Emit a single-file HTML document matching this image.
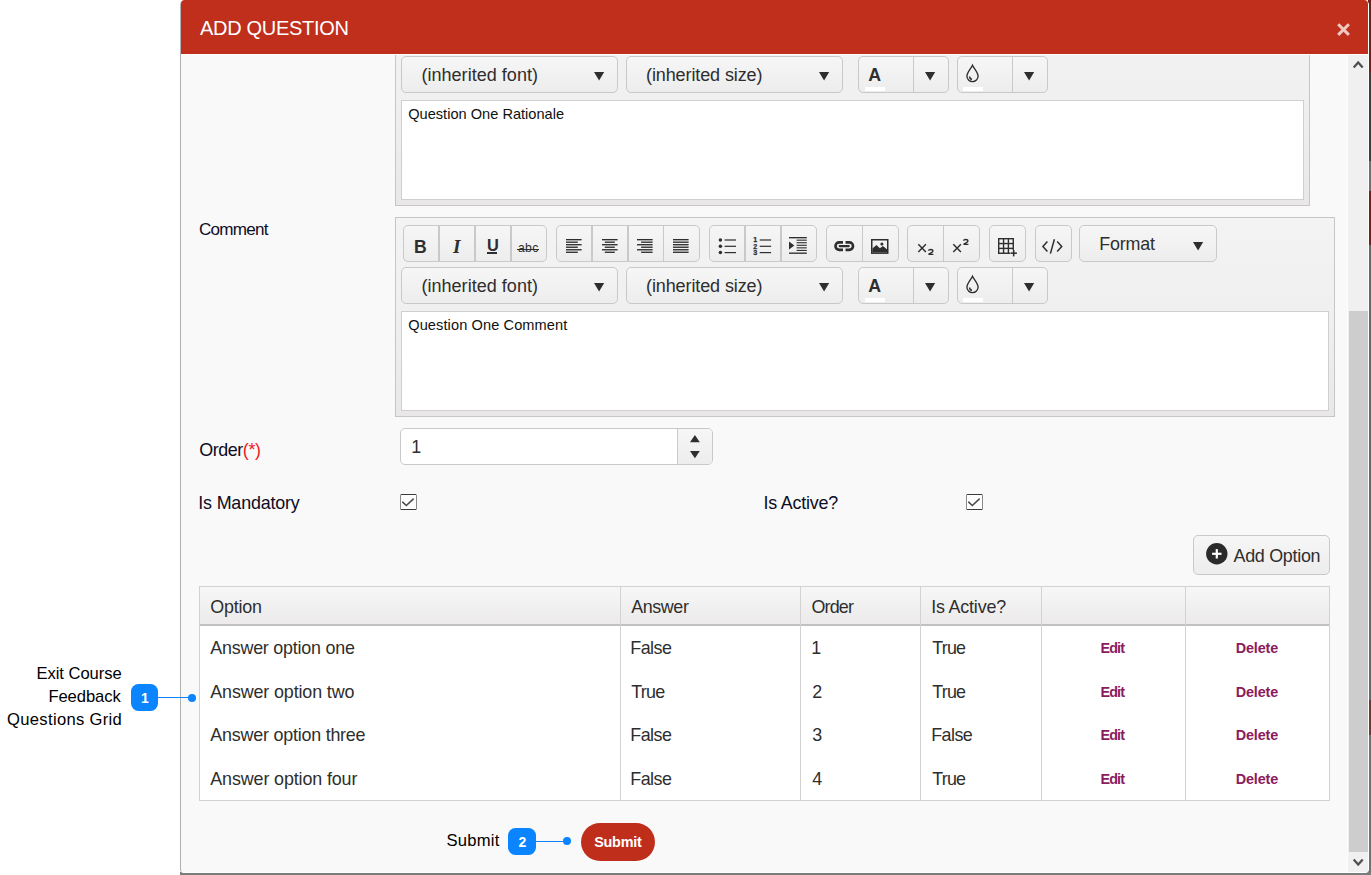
<!DOCTYPE html>
<html lang="en"><head><meta charset="utf-8"><title>Add Question</title>
<style>
html,body{margin:0;padding:0;}
body{width:1371px;height:875px;overflow:hidden;position:relative;background:#fff;font-family:'Liberation Sans', sans-serif;}
body>div,body>svg,body>span{position:absolute;display:block;}
.t{white-space:nowrap;}
svg{overflow:visible;}
</style></head><body>
<div style="left:1368px;top:0px;width:3px;height:875px;background:linear-gradient(#6b231c 0,#6b231c 73px,#3e3e3e 73px,#3e3e3e 161px,#707070 161px,#707070 191px,#6b231c 191px,#6b231c 245px,#686868 245px,#686868 700px,#6b3a35 700px,#6b3a35 735px,#727272 735px);"></div>
<div style="left:180px;top:872px;width:1191px;height:3px;background:#7b7b7b;"></div>
<div style="left:180px;top:0px;width:1189.3px;height:873px;background:#f9f9f9;border-left:1px solid #b1b1b1;border-right:1.3px solid #fff;border-bottom:1px solid #fff;box-sizing:border-box;border-radius:5px 5px 4px 4px;"></div>
<div style="left:395px;top:6.2px;width:915.3px;height:199.4px;background:linear-gradient(#f3f3f3,#f1f0f0 45%,#e9e7e7);border:1px solid #c6c6c6;box-sizing:border-box;"></div>
<div style="left:401px;top:56px;width:217px;height:37px;background:linear-gradient(#f6f6f6,#eeeded);border:1px solid #c9c9c9;border-radius:5px;box-sizing:border-box;"></div>
<span class="t" style="left:421.40px;top:65px;height:20px;line-height:20px;font-size:18.0px;color:#2e2e2e;letter-spacing:0.036px;">(inherited font)</span>
<svg style="left:593.1px;top:70.5px" width="12.2" height="10.6" viewBox="0 0 12.2 10.6"><path d="M1 1 L11.2 1 L6.1 9.6 Z" fill="#2e2e2e"/></svg>
<div style="left:626px;top:56px;width:217px;height:37px;background:linear-gradient(#f6f6f6,#eeeded);border:1px solid #c9c9c9;border-radius:5px;box-sizing:border-box;"></div>
<span class="t" style="left:646.00px;top:65px;height:20px;line-height:20px;font-size:18.0px;color:#2e2e2e;letter-spacing:-0.103px;">(inherited size)</span>
<svg style="left:817.9px;top:70.5px" width="12.2" height="10.6" viewBox="0 0 12.2 10.6"><path d="M1 1 L11.2 1 L6.1 9.6 Z" fill="#2e2e2e"/></svg>
<div style="left:858.3px;top:56px;width:90.6px;height:37px;background:linear-gradient(#f6f6f6,#eeeded);border:1px solid #c9c9c9;border-radius:5px;box-sizing:border-box;"></div>
<div style="left:912.9px;top:57px;width:1.3px;height:35px;background:#c9c9c9;"></div>
<div style="left:864.9px;top:87px;width:20px;height:4px;background:#fff;"></div>
<svg style="left:924.2px;top:70.5px" width="12.2" height="10.6" viewBox="0 0 12.2 10.6"><path d="M1 1 L11.2 1 L6.1 9.6 Z" fill="#2e2e2e"/></svg>
<span class="t" style="left:868.30px;top:65px;height:20px;line-height:20px;font-size:17.8px;color:#2e2e2e;font-weight:700;">A</span>
<div style="left:957.3px;top:56px;width:90.6px;height:37px;background:linear-gradient(#f6f6f6,#eeeded);border:1px solid #c9c9c9;border-radius:5px;box-sizing:border-box;"></div>
<div style="left:1011.9px;top:57px;width:1.3px;height:35px;background:#c9c9c9;"></div>
<div style="left:962.9px;top:87px;width:20px;height:4px;background:#fff;"></div>
<svg style="left:1023.2px;top:70.5px" width="12.2" height="10.6" viewBox="0 0 12.2 10.6"><path d="M1 1 L11.2 1 L6.1 9.6 Z" fill="#2e2e2e"/></svg>
<svg style="left:964.7px;top:64.4px" width="15" height="20" viewBox="0 0 15 20"><path d="M7.5 1.2 C5.8 4.8 1.9 8.4 1.9 12.1 A5.6 5.6 0 0 0 13.1 12.1 C13.1 8.4 9.2 4.8 7.5 1.2 Z" fill="none" stroke="#2e2e2e" stroke-width="1.35"/><path d="M4.6 12.4 A3 3 0 0 0 7 15.3" fill="none" stroke="#2e2e2e" stroke-width="1.5"/></svg>
<div style="left:401px;top:100.2px;width:902.5999999999999px;height:100.3px;background:#fff;border:1px solid #cfcfcf;box-sizing:border-box;"></div>
<span class="t" style="left:408.20px;top:106px;height:16px;line-height:16px;font-size:14.6px;color:#111;letter-spacing:0.007px;">Question One Rationale</span>
<div style="left:395px;top:217.2px;width:940.3px;height:199.4px;background:linear-gradient(#f3f3f3,#f1f0f0 45%,#e9e7e7);border:1px solid #c6c6c6;box-sizing:border-box;"></div>
<div style="left:403.3px;top:225px;width:143.4px;height:37px;background:linear-gradient(#f6f6f6,#eeeded);border:1px solid #c9c9c9;border-radius:5px;box-sizing:border-box;"></div>
<div style="left:438.45px;top:226px;width:1.4px;height:35px;background:#c9c9c9;"></div>
<div style="left:474.3px;top:226px;width:1.4px;height:35px;background:#c9c9c9;"></div>
<div style="left:510.15px;top:226px;width:1.4px;height:35px;background:#c9c9c9;"></div>
<div style="left:556.3px;top:225px;width:143.3px;height:37px;background:linear-gradient(#f6f6f6,#eeeded);border:1px solid #c9c9c9;border-radius:5px;box-sizing:border-box;"></div>
<div style="left:591.42px;top:226px;width:1.4px;height:35px;background:#c9c9c9;"></div>
<div style="left:627.25px;top:226px;width:1.4px;height:35px;background:#c9c9c9;"></div>
<div style="left:663.07px;top:226px;width:1.4px;height:35px;background:#c9c9c9;"></div>
<div style="left:709.3px;top:225px;width:107.5px;height:37px;background:linear-gradient(#f6f6f6,#eeeded);border:1px solid #c9c9c9;border-radius:5px;box-sizing:border-box;"></div>
<div style="left:744.43px;top:226px;width:1.4px;height:35px;background:#c9c9c9;"></div>
<div style="left:780.27px;top:226px;width:1.4px;height:35px;background:#c9c9c9;"></div>
<div style="left:826.3px;top:225px;width:72.3px;height:37px;background:linear-gradient(#f6f6f6,#eeeded);border:1px solid #c9c9c9;border-radius:5px;box-sizing:border-box;"></div>
<div style="left:861.75px;top:226px;width:1.4px;height:35px;background:#c9c9c9;"></div>
<div style="left:907.3px;top:225px;width:72.3px;height:37px;background:linear-gradient(#f6f6f6,#eeeded);border:1px solid #c9c9c9;border-radius:5px;box-sizing:border-box;"></div>
<div style="left:942.75px;top:226px;width:1.4px;height:35px;background:#c9c9c9;"></div>
<div style="left:989.3px;top:225px;width:36.4px;height:37px;background:linear-gradient(#f6f6f6,#eeeded);border:1px solid #c9c9c9;border-radius:5px;box-sizing:border-box;"></div>
<div style="left:1035.1px;top:225px;width:36.7px;height:37px;background:linear-gradient(#f6f6f6,#eeeded);border:1px solid #c9c9c9;border-radius:5px;box-sizing:border-box;"></div>
<span class="t" style="left:414.00px;top:237px;height:20px;line-height:20px;font-size:17.6px;color:#2e2e2e;font-weight:700;">B</span>
<span class="t" style="left:452.90px;top:236px;height:21px;line-height:21px;font-size:19.2px;color:#2e2e2e;font-weight:700;font-family:'Liberation Serif', serif;font-style:italic;">I</span>
<span class="t" style="left:486.90px;top:236px;height:18px;line-height:18px;font-size:16.4px;color:#2e2e2e;font-weight:700;">U</span>
<div style="left:486.9px;top:252.3px;width:10.6px;height:1.4px;background:#2e2e2e;"></div>
<span class="t" style="left:518.00px;top:241px;height:14px;line-height:14px;font-size:12.2px;color:#2e2e2e;letter-spacing:0.322px;">abc</span>
<div style="left:517.2px;top:249.0px;width:21.8px;height:1.2px;background:#2e2e2e;"></div>
<svg style="left:564.6px;top:238.0px" width="18" height="16" viewBox="0 0 18 16"><rect x="1.00" y="1.00" width="15.60" height="1.35" fill="#2e2e2e"/><rect x="1.00" y="3.52" width="11.80" height="1.35" fill="#2e2e2e"/><rect x="1.00" y="6.04" width="15.60" height="1.35" fill="#2e2e2e"/><rect x="1.00" y="8.56" width="11.80" height="1.35" fill="#2e2e2e"/><rect x="1.00" y="11.08" width="15.60" height="1.35" fill="#2e2e2e"/><rect x="1.00" y="13.60" width="11.80" height="1.35" fill="#2e2e2e"/></svg>
<svg style="left:600.6px;top:238.0px" width="18" height="16" viewBox="0 0 18 16"><rect x="1.00" y="1.00" width="15.60" height="1.35" fill="#2e2e2e"/><rect x="3.80" y="3.52" width="10.00" height="1.35" fill="#2e2e2e"/><rect x="1.00" y="6.04" width="15.60" height="1.35" fill="#2e2e2e"/><rect x="3.80" y="8.56" width="10.00" height="1.35" fill="#2e2e2e"/><rect x="1.00" y="11.08" width="15.60" height="1.35" fill="#2e2e2e"/><rect x="3.80" y="13.60" width="10.00" height="1.35" fill="#2e2e2e"/></svg>
<svg style="left:636.2px;top:238.0px" width="18" height="16" viewBox="0 0 18 16"><rect x="1.00" y="1.00" width="15.60" height="1.35" fill="#2e2e2e"/><rect x="5.10" y="3.52" width="11.50" height="1.35" fill="#2e2e2e"/><rect x="1.00" y="6.04" width="15.60" height="1.35" fill="#2e2e2e"/><rect x="5.10" y="8.56" width="11.50" height="1.35" fill="#2e2e2e"/><rect x="1.00" y="11.08" width="15.60" height="1.35" fill="#2e2e2e"/><rect x="5.10" y="13.60" width="11.50" height="1.35" fill="#2e2e2e"/></svg>
<svg style="left:672.0px;top:238.0px" width="18" height="16" viewBox="0 0 18 16"><rect x="1.00" y="1.00" width="15.60" height="1.35" fill="#2e2e2e"/><rect x="1.00" y="3.52" width="15.60" height="1.35" fill="#2e2e2e"/><rect x="1.00" y="6.04" width="15.60" height="1.35" fill="#2e2e2e"/><rect x="1.00" y="8.56" width="15.60" height="1.35" fill="#2e2e2e"/><rect x="1.00" y="11.08" width="15.60" height="1.35" fill="#2e2e2e"/><rect x="1.00" y="13.60" width="15.60" height="1.35" fill="#2e2e2e"/></svg>
<svg style="left:717.5px;top:236.9px" width="20" height="20" viewBox="0 0 20 20"><circle cx="2.4" cy="3.00" r="1.75" fill="#2e2e2e"/><rect x="6.6" y="2.40" width="11.4" height="1.2" fill="#2e2e2e"/><circle cx="2.4" cy="9.30" r="1.75" fill="#2e2e2e"/><rect x="6.6" y="8.70" width="11.4" height="1.2" fill="#2e2e2e"/><circle cx="2.4" cy="15.60" r="1.75" fill="#2e2e2e"/><rect x="6.6" y="15.00" width="11.4" height="1.2" fill="#2e2e2e"/></svg>
<svg style="left:753.2px;top:236.9px" width="20" height="20" viewBox="0 0 20 20"><text x="0.2" y="5.45" font-family=''Liberation Sans', sans-serif' font-weight="700" font-size="7.2" stroke="#2e2e2e" stroke-width="0.25" fill="#2e2e2e">1</text><rect x="6.7" y="2.40" width="11.4" height="1.2" fill="#2e2e2e"/><text x="0.2" y="11.75" font-family=''Liberation Sans', sans-serif' font-weight="700" font-size="7.2" stroke="#2e2e2e" stroke-width="0.25" fill="#2e2e2e">2</text><rect x="6.7" y="8.70" width="11.4" height="1.2" fill="#2e2e2e"/><text x="0.2" y="18.05" font-family=''Liberation Sans', sans-serif' font-weight="700" font-size="7.2" stroke="#2e2e2e" stroke-width="0.25" fill="#2e2e2e">3</text><rect x="6.7" y="15.00" width="11.4" height="1.2" fill="#2e2e2e"/></svg>
<svg style="left:789.1px;top:237.3px" width="18" height="17" viewBox="0 0 18 17"><rect x="0" y="0" width="17.8" height="1.35" fill="#2e2e2e"/><rect x="0" y="15.5" width="17.8" height="1.35" fill="#2e2e2e"/><rect x="7.6" y="2.62" width="10.2" height="1.1" fill="#2e2e2e"/><rect x="7.6" y="5.18" width="10.2" height="1.1" fill="#2e2e2e"/><rect x="7.6" y="7.74" width="10.2" height="1.1" fill="#2e2e2e"/><rect x="7.6" y="10.30" width="10.2" height="1.1" fill="#2e2e2e"/><rect x="7.6" y="12.86" width="10.2" height="1.1" fill="#2e2e2e"/><path d="M0 4.4 L5.3 8.4 L0 12.4 Z" fill="#2e2e2e"/></svg>
<svg style="left:833.7px;top:240.8px" width="20.5" height="10.2" viewBox="0 0 20.5 10.2"><path d="M9.0 1.35 L5.2 1.35 A3.75 3.75 0 0 0 5.2 8.85 L9.0 8.85" fill="none" stroke="#2e2e2e" stroke-width="2.6"/><path d="M11.5 1.35 L15.3 1.35 A3.75 3.75 0 0 1 15.3 8.85 L11.5 8.85" fill="none" stroke="#2e2e2e" stroke-width="2.6"/><rect x="4.6" y="4.0" width="11.3" height="2.2" rx="1.1" fill="#2e2e2e"/></svg>
<svg style="left:870.6px;top:239.1px" width="17.5" height="15" viewBox="0 0 17.5 15"><rect x="0.75" y="0.75" width="16" height="13.4" fill="none" stroke="#2e2e2e" stroke-width="1.5"/><path d="M1.4 13.6 L1.4 9.6 L5.4 6.0 L8.9 9.3 L11.9 6.9 L16.2 10.4 L16.2 13.6 Z" fill="#2e2e2e"/><circle cx="10.9" cy="5.0" r="1.55" fill="#2e2e2e"/></svg>
<svg style="left:916.7px;top:243.2px" width="10" height="10" viewBox="0 0 10 10"><path d="M1.3 1.2 L8.9 8.9 M8.9 1.2 L1.3 8.9" stroke="#2e2e2e" stroke-width="1.45" fill="none"/></svg>
<svg style="left:926.6px;top:248.2px" width="8" height="8" viewBox="0 0 8 8"><path d="M1.5 2.6 Q1.7 1.5 3.7 1.5 Q5.9 1.5 5.9 2.9 Q5.9 3.9 4.4 4.7 L1.5 6.3 L6.4 6.3" stroke="#2e2e2e" stroke-width="1.35" fill="none"/></svg>
<svg style="left:952.4px;top:243.2px" width="10" height="10" viewBox="0 0 10 10"><path d="M1.3 1.2 L8.9 8.9 M8.9 1.2 L1.3 8.9" stroke="#2e2e2e" stroke-width="1.45" fill="none"/></svg>
<svg style="left:962.2px;top:238.0px" width="8" height="8" viewBox="0 0 8 8"><path d="M1.5 2.6 Q1.7 1.5 3.7 1.5 Q5.9 1.5 5.9 2.9 Q5.9 3.9 4.4 4.7 L1.5 6.3 L6.4 6.3" stroke="#2e2e2e" stroke-width="1.35" fill="none"/></svg>
<svg style="left:998.2px;top:237.9px" width="21" height="21" viewBox="0 0 21 21"><rect x="0.00" y="0" width="1.4" height="15.95" fill="#2e2e2e"/><rect x="0" y="0.00" width="15.95" height="1.4" fill="#2e2e2e"/><rect x="4.85" y="0" width="1.4" height="15.95" fill="#2e2e2e"/><rect x="0" y="4.85" width="15.95" height="1.4" fill="#2e2e2e"/><rect x="9.70" y="0" width="1.4" height="15.95" fill="#2e2e2e"/><rect x="0" y="9.70" width="15.95" height="1.4" fill="#2e2e2e"/><rect x="14.55" y="0" width="1.4" height="15.95" fill="#2e2e2e"/><rect x="0" y="14.55" width="15.95" height="1.4" fill="#2e2e2e"/><rect x="12.1" y="11.9" width="8" height="8" fill="#f1f0f0"/><rect x="12.5" y="14.4" width="6.4" height="1.55" fill="#2e2e2e"/><rect x="14.9" y="12.0" width="1.55" height="6.4" fill="#2e2e2e"/></svg>
<svg style="left:1042.3px;top:238.9px" width="21" height="15" viewBox="0 0 21 15"><path d="M5.4 2.6 L0.9 7.5 L5.4 12.4" fill="none" stroke="#2e2e2e" stroke-width="1.5"/><path d="M15.2 2.6 L19.7 7.5 L15.2 12.4" fill="none" stroke="#2e2e2e" stroke-width="1.5"/><path d="M12.4 0.3 L8.4 14.6" fill="none" stroke="#2e2e2e" stroke-width="1.5"/></svg>
<div style="left:1079.2px;top:225px;width:137.8px;height:37px;background:linear-gradient(#f6f6f6,#eeeded);border:1px solid #c9c9c9;border-radius:5px;box-sizing:border-box;"></div>
<span class="t" style="left:1099.30px;top:234px;height:20px;line-height:20px;font-size:17.9px;color:#2e2e2e;letter-spacing:-0.178px;">Format</span>
<svg style="left:1191.5px;top:240.5px" width="12.2" height="10.6" viewBox="0 0 12.2 10.6"><path d="M1 1 L11.2 1 L6.1 9.6 Z" fill="#2e2e2e"/></svg>
<div style="left:401px;top:267px;width:217px;height:37px;background:linear-gradient(#f6f6f6,#eeeded);border:1px solid #c9c9c9;border-radius:5px;box-sizing:border-box;"></div>
<span class="t" style="left:421.40px;top:276px;height:20px;line-height:20px;font-size:18.0px;color:#2e2e2e;letter-spacing:0.036px;">(inherited font)</span>
<svg style="left:593.1px;top:281.5px" width="12.2" height="10.6" viewBox="0 0 12.2 10.6"><path d="M1 1 L11.2 1 L6.1 9.6 Z" fill="#2e2e2e"/></svg>
<div style="left:626px;top:267px;width:217px;height:37px;background:linear-gradient(#f6f6f6,#eeeded);border:1px solid #c9c9c9;border-radius:5px;box-sizing:border-box;"></div>
<span class="t" style="left:646.00px;top:276px;height:20px;line-height:20px;font-size:18.0px;color:#2e2e2e;letter-spacing:-0.103px;">(inherited size)</span>
<svg style="left:817.9px;top:281.5px" width="12.2" height="10.6" viewBox="0 0 12.2 10.6"><path d="M1 1 L11.2 1 L6.1 9.6 Z" fill="#2e2e2e"/></svg>
<div style="left:858.3px;top:267px;width:90.6px;height:37px;background:linear-gradient(#f6f6f6,#eeeded);border:1px solid #c9c9c9;border-radius:5px;box-sizing:border-box;"></div>
<div style="left:912.9px;top:268px;width:1.3px;height:35px;background:#c9c9c9;"></div>
<div style="left:864.9px;top:298px;width:20px;height:4px;background:#fff;"></div>
<svg style="left:924.2px;top:281.5px" width="12.2" height="10.6" viewBox="0 0 12.2 10.6"><path d="M1 1 L11.2 1 L6.1 9.6 Z" fill="#2e2e2e"/></svg>
<span class="t" style="left:868.30px;top:276px;height:20px;line-height:20px;font-size:17.8px;color:#2e2e2e;font-weight:700;">A</span>
<div style="left:957.3px;top:267px;width:90.6px;height:37px;background:linear-gradient(#f6f6f6,#eeeded);border:1px solid #c9c9c9;border-radius:5px;box-sizing:border-box;"></div>
<div style="left:1011.9px;top:268px;width:1.3px;height:35px;background:#c9c9c9;"></div>
<div style="left:962.9px;top:298px;width:20px;height:4px;background:#fff;"></div>
<svg style="left:1023.2px;top:281.5px" width="12.2" height="10.6" viewBox="0 0 12.2 10.6"><path d="M1 1 L11.2 1 L6.1 9.6 Z" fill="#2e2e2e"/></svg>
<svg style="left:964.7px;top:275.4px" width="15" height="20" viewBox="0 0 15 20"><path d="M7.5 1.2 C5.8 4.8 1.9 8.4 1.9 12.1 A5.6 5.6 0 0 0 13.1 12.1 C13.1 8.4 9.2 4.8 7.5 1.2 Z" fill="none" stroke="#2e2e2e" stroke-width="1.35"/><path d="M4.6 12.4 A3 3 0 0 0 7 15.3" fill="none" stroke="#2e2e2e" stroke-width="1.5"/></svg>
<div style="left:401px;top:311.2px;width:927.5999999999999px;height:100.3px;background:#fff;border:1px solid #cfcfcf;box-sizing:border-box;"></div>
<span class="t" style="left:408.20px;top:317px;height:16px;line-height:16px;font-size:14.6px;color:#111;letter-spacing:0.094px;">Question One Comment</span>
<span class="t" style="left:199.00px;top:220px;height:19px;line-height:19px;font-size:17.1px;color:#0c0c24;letter-spacing:-0.757px;">Comment</span>
<span class="t" style="left:199.30px;top:440px;height:20px;line-height:20px;font-size:17.9px;color:#0c0c24;letter-spacing:-0.436px;">Order<span style="color:#ee1c25">(*)</span></span>
<span class="t" style="left:198.30px;top:493px;height:20px;line-height:20px;font-size:17.9px;color:#0c0c24;letter-spacing:-0.179px;">Is Mandatory</span>
<span class="t" style="left:763.40px;top:493px;height:20px;line-height:20px;font-size:17.9px;color:#0c0c24;letter-spacing:-0.201px;">Is Active?</span>
<div style="left:400.4px;top:428px;width:312.6px;height:36.8px;background:#fff;border:1px solid #c9c9c9;border-radius:5px;box-sizing:border-box;"></div>
<div style="left:677px;top:428.8px;width:35.2px;height:35.2px;background:linear-gradient(#f6f6f6,#eeeded);border-left:1px solid #c9c9c9;border-radius:0 4px 4px 0;box-sizing:border-box;"></div>
<span class="t" style="left:411.20px;top:437px;height:20px;line-height:20px;font-size:17.9px;color:#2e2e2e;">1</span>
<svg style="left:689.2px;top:434.3px" width="11.8" height="9.2" viewBox="0 0 11.8 9.2"><path d="M1 8.2 L10.8 8.2 L5.9 1 Z" fill="#2e2e2e"/></svg>
<svg style="left:689.2px;top:450.1px" width="11.8" height="9.2" viewBox="0 0 11.8 9.2"><path d="M1 1 L10.8 1 L5.9 8.2 Z" fill="#2e2e2e"/></svg>
<div style="left:400.4px;top:493.9px;width:16.2px;height:16.2px;background:#fff;border:1.3px solid;border-color:#3a3a3a #8a8a8a;border-left-width:1.5px;border-right-width:1.5px;box-sizing:border-box;border-radius:1.5px;"></div>
<svg style="left:400.4px;top:493.9px" width="16.2" height="16.2" viewBox="0 0 16.2 16.2"><path d="M2.7 8.2 L6.3 11.5 L13.2 5.1" fill="none" stroke="#4a4a4a" stroke-width="1.55" stroke-linecap="round"/></svg>
<div style="left:966.4px;top:493.9px;width:16.2px;height:16.2px;background:#fff;border:1.3px solid;border-color:#3a3a3a #8a8a8a;border-left-width:1.5px;border-right-width:1.5px;box-sizing:border-box;border-radius:1.5px;"></div>
<svg style="left:966.4px;top:493.9px" width="16.2" height="16.2" viewBox="0 0 16.2 16.2"><path d="M2.7 8.2 L6.3 11.5 L13.2 5.1" fill="none" stroke="#4a4a4a" stroke-width="1.55" stroke-linecap="round"/></svg>
<div style="left:1193.2px;top:535.3px;width:136.5px;height:39.6px;background:linear-gradient(#f6f6f6,#eeeded);border:1px solid #c9c9c9;border-radius:5px;box-sizing:border-box;"></div>
<svg style="left:1206.3px;top:543.4px" width="21.6" height="21.6" viewBox="0 0 21.6 21.6"><circle cx="10.8" cy="10.8" r="10.7" fill="#2b2b2b"/><rect x="6.1" y="9.7" width="9.4" height="2.2" fill="#fff"/><rect x="9.7" y="6.1" width="2.2" height="9.4" fill="#fff"/></svg>
<span class="t" style="left:1233.50px;top:546px;height:20px;line-height:20px;font-size:17.9px;color:#2e2e2e;letter-spacing:-0.274px;">Add Option</span>
<div style="left:199.3px;top:586px;width:1131.1000000000001px;height:215px;background:#fff;border:1px solid #d2d2d2;box-sizing:border-box;"></div>
<div style="left:200.3px;top:587px;width:1129.1000000000001px;height:37px;background:linear-gradient(#f7f7f7,#eceaea);"></div>
<div style="left:200.3px;top:624px;width:1129.1000000000001px;height:2px;background:#c0c0c0;"></div>
<div style="left:620px;top:586px;width:1px;height:214px;background:#d2d2d2;"></div>
<div style="left:800px;top:586px;width:1px;height:214px;background:#d2d2d2;"></div>
<div style="left:920px;top:586px;width:1px;height:214px;background:#d2d2d2;"></div>
<div style="left:1041px;top:586px;width:1px;height:214px;background:#d2d2d2;"></div>
<div style="left:1185px;top:586px;width:1px;height:214px;background:#d2d2d2;"></div>
<span class="t" style="left:210.30px;top:597px;height:20px;line-height:20px;font-size:17.9px;color:#2e2e2e;letter-spacing:-0.192px;">Option</span>
<span class="t" style="left:631.30px;top:597px;height:20px;line-height:20px;font-size:17.9px;color:#2e2e2e;letter-spacing:-0.420px;">Answer</span>
<span class="t" style="left:811.40px;top:597px;height:20px;line-height:20px;font-size:17.9px;color:#2e2e2e;letter-spacing:-0.793px;">Order</span>
<span class="t" style="left:931.20px;top:597px;height:20px;line-height:20px;font-size:17.9px;color:#2e2e2e;letter-spacing:-0.178px;">Is Active?</span>
<span class="t" style="left:210.30px;top:638px;height:20px;line-height:20px;font-size:17.9px;color:#2e2e2e;letter-spacing:-0.228px;">Answer option one</span>
<span class="t" style="left:630.30px;top:638px;height:20px;line-height:20px;font-size:17.9px;color:#2e2e2e;letter-spacing:-0.550px;">False</span>
<span class="t" style="left:811.20px;top:638px;height:20px;line-height:20px;font-size:17.9px;color:#2e2e2e;">1</span>
<span class="t" style="left:932.20px;top:638px;height:20px;line-height:20px;font-size:17.9px;color:#2e2e2e;letter-spacing:-0.757px;">True</span>
<span class="t" style="left:1100.40px;top:640px;height:16px;line-height:16px;font-size:14.4px;color:#8a1c5e;font-weight:700;letter-spacing:-0.829px;">Edit</span>
<span class="t" style="left:1235.70px;top:640px;height:16px;line-height:16px;font-size:14.4px;color:#8a1c5e;font-weight:700;letter-spacing:-0.118px;">Delete</span>
<span class="t" style="left:210.30px;top:682px;height:20px;line-height:20px;font-size:17.9px;color:#2e2e2e;letter-spacing:-0.127px;">Answer option two</span>
<span class="t" style="left:631.30px;top:682px;height:20px;line-height:20px;font-size:17.9px;color:#2e2e2e;letter-spacing:-0.757px;">True</span>
<span class="t" style="left:812.20px;top:682px;height:20px;line-height:20px;font-size:17.9px;color:#2e2e2e;">2</span>
<span class="t" style="left:932.20px;top:682px;height:20px;line-height:20px;font-size:17.9px;color:#2e2e2e;letter-spacing:-0.757px;">True</span>
<span class="t" style="left:1100.40px;top:684px;height:16px;line-height:16px;font-size:14.4px;color:#8a1c5e;font-weight:700;letter-spacing:-0.829px;">Edit</span>
<span class="t" style="left:1235.70px;top:684px;height:16px;line-height:16px;font-size:14.4px;color:#8a1c5e;font-weight:700;letter-spacing:-0.118px;">Delete</span>
<span class="t" style="left:210.30px;top:725px;height:20px;line-height:20px;font-size:17.9px;color:#2e2e2e;letter-spacing:-0.215px;">Answer option three</span>
<span class="t" style="left:630.30px;top:725px;height:20px;line-height:20px;font-size:17.9px;color:#2e2e2e;letter-spacing:-0.550px;">False</span>
<span class="t" style="left:812.20px;top:725px;height:20px;line-height:20px;font-size:17.9px;color:#2e2e2e;">3</span>
<span class="t" style="left:931.20px;top:725px;height:20px;line-height:20px;font-size:17.9px;color:#2e2e2e;letter-spacing:-0.550px;">False</span>
<span class="t" style="left:1100.40px;top:727px;height:16px;line-height:16px;font-size:14.4px;color:#8a1c5e;font-weight:700;letter-spacing:-0.829px;">Edit</span>
<span class="t" style="left:1235.70px;top:727px;height:16px;line-height:16px;font-size:14.4px;color:#8a1c5e;font-weight:700;letter-spacing:-0.118px;">Delete</span>
<span class="t" style="left:210.30px;top:769px;height:20px;line-height:20px;font-size:17.9px;color:#2e2e2e;letter-spacing:-0.124px;">Answer option four</span>
<span class="t" style="left:630.30px;top:769px;height:20px;line-height:20px;font-size:17.9px;color:#2e2e2e;letter-spacing:-0.550px;">False</span>
<span class="t" style="left:812.20px;top:769px;height:20px;line-height:20px;font-size:17.9px;color:#2e2e2e;">4</span>
<span class="t" style="left:932.20px;top:769px;height:20px;line-height:20px;font-size:17.9px;color:#2e2e2e;letter-spacing:-0.757px;">True</span>
<span class="t" style="left:1100.40px;top:771px;height:16px;line-height:16px;font-size:14.4px;color:#8a1c5e;font-weight:700;letter-spacing:-0.829px;">Edit</span>
<span class="t" style="left:1235.70px;top:771px;height:16px;line-height:16px;font-size:14.4px;color:#8a1c5e;font-weight:700;letter-spacing:-0.118px;">Delete</span>
<div style="left:581px;top:822.8px;width:74px;height:38.2px;background:#bf2e1b;border-radius:19.1px;"></div>
<span class="t" style="left:594.20px;top:834px;height:16px;line-height:16px;font-size:14.4px;color:#fff;font-weight:700;letter-spacing:-0.235px;">Submit</span>
<div style="left:130.6px;top:683.6px;width:27.8px;height:27.8px;background:#0a84ff;border-radius:7.5px;"></div>
<span class="t" style="left:140.90px;top:690px;height:16px;line-height:16px;font-size:14px;color:#fff;font-weight:700;">1</span>
<div style="left:157.6px;top:696.9px;width:34.0px;height:1.3px;background:#0a84ff;"></div>
<div style="left:187.6px;top:693.5px;width:8px;height:8px;background:#0a84ff;border-radius:50%;"></div>
<div style="left:508.3px;top:827.5px;width:27.8px;height:27.8px;background:#0a84ff;border-radius:7.5px;"></div>
<span class="t" style="left:518.60px;top:834px;height:16px;line-height:16px;font-size:14px;color:#fff;font-weight:700;">2</span>
<div style="left:535.3px;top:840.8px;width:31.30000000000001px;height:1.3px;background:#0a84ff;"></div>
<div style="left:562.6px;top:837.4px;width:8px;height:8px;background:#0a84ff;border-radius:50%;"></div>
<span class="t" style="left:36.40px;top:664px;height:19px;line-height:19px;font-size:16.6px;color:#000;letter-spacing:-0.044px;">Exit Course</span>
<span class="t" style="left:48.40px;top:687px;height:19px;line-height:19px;font-size:16.6px;color:#000;letter-spacing:-0.068px;">Feedback</span>
<span class="t" style="left:7.10px;top:710px;height:19px;line-height:19px;font-size:16.6px;color:#000;letter-spacing:0.304px;">Questions Grid</span>
<span class="t" style="left:446.60px;top:831px;height:19px;line-height:19px;font-size:16.6px;color:#000;letter-spacing:0.213px;">Submit</span>
<div style="left:181px;top:0px;width:1187px;height:53.6px;background:#bf2f1c;border-radius:4px 4px 0 0;"></div>
<div style="left:181px;top:53.6px;width:1187px;height:1.2px;background:#fdfdfd;"></div>
<span class="t" style="left:200.00px;top:17px;height:22px;line-height:22px;font-size:20px;color:#fff;letter-spacing:-0.299px;">ADD QUESTION</span>
<svg style="left:1335px;top:21px" width="17" height="17" viewBox="0 0 17 17"><path d="M3.2 3.2 L13.9 13.9 M13.9 3.2 L3.2 13.9" stroke="#f0c9c4" stroke-width="3" fill="none"/></svg>
<div style="left:1348.4px;top:54.8px;width:19.5px;height:817.6px;background:#f0f0f0;"></div>
<div style="left:1347.4px;top:54.8px;width:1px;height:817.6px;background:#fdfdfd;"></div>
<div style="left:1348.6px;top:311.2px;width:19.2px;height:540.6px;background:#cdcdcd;"></div>
<svg style="left:1351.8px;top:59px" width="13" height="11" viewBox="0 0 13 11"><path d="M1.7 8.4 L6.2 3.4 L10.7 8.4" stroke="#4f4f4f" stroke-width="2.2" fill="none"/></svg>
<svg style="left:1351.8px;top:856.6px" width="13" height="11" viewBox="0 0 13 11"><path d="M1.7 2.6 L6.2 7.6 L10.7 2.6" stroke="#4f4f4f" stroke-width="2.2" fill="none"/></svg>
</body></html>
